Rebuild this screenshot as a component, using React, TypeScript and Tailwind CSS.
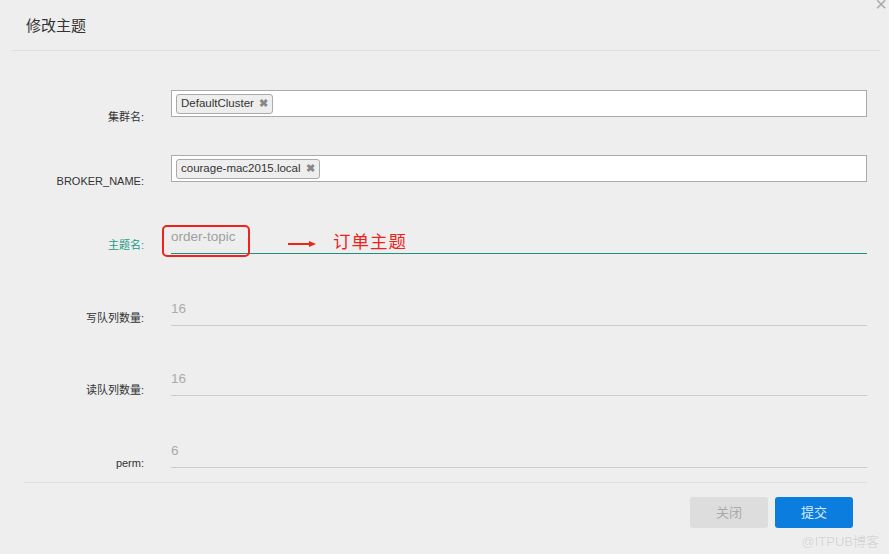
import React from 'react';

const Tag: React.FC<{ text: string }> = ({ text }) => (
    <span className="inline-flex items-center h-[20px] px-[4px] rounded-[3px] border border-[#aaaaaa] bg-[#eeeeee] text-[11.5px] text-[#333333] leading-none">
        {text}
        <span className="ml-[5px] text-[11px] font-bold text-[#888888]">✖</span>
    </span>
);

const Label: React.FC<{ text: string; pt: string; teal?: boolean }> = ({ text, pt, teal }) => (
    <div className={`w-[144px] shrink-0 text-right text-[11px] leading-[14px] ${pt} ${teal ? 'text-[#1a9b88]' : 'text-[#333333]'}`}>
        {text}
    </div>
);

export default function App() {
    return (
        <div className="relative w-[889px] h-[554px] overflow-hidden bg-[#eeeeee] font-['Liberation_Sans','Noto_Sans_CJK_SC',sans-serif]">
            {/* Close */}
            <span className="absolute top-[-6px] right-[2px] text-[20px] leading-none text-[#aaaaaa]">×</span>

            {/* Header */}
            <div className="ml-[12px] mr-[9px] h-[51px] border-b border-[#dedede] flex items-center pt-[2px] pl-[14px] text-[15px] text-[#333333]">
                修改主题
            </div>

            {/* Form */}
            <div className="flex flex-col">
                <div className="flex h-[79px]">
                    <Label text="集群名:" pt="pt-[59px]" />
                    <div className="ml-[27px] w-[696px] pt-[39px]">
                        <div className="h-[27px] bg-white border border-[#aaaaaa] flex items-center pl-[4px]">
                            <Tag text="DefaultCluster" />
                        </div>
                    </div>
                </div>

                <div className="flex h-[70px]">
                    <Label text="BROKER_NAME:" pt="pt-[44px]" />
                    <div className="ml-[27px] w-[696px] pt-[25px]">
                        <div className="h-[27px] bg-white border border-[#aaaaaa] flex items-center pl-[4px]">
                            <Tag text="courage-mac2015.local" />
                        </div>
                    </div>
                </div>

                <div className="relative flex h-[70px]">
                    <Label text="主题名:" pt="pt-[38px]" teal />
                    <div className="ml-[27px] w-[696px] pt-[22px]">
                        <div className="h-[32px] border-b border-[#1f8f80] flex items-center text-[13.5px] font-light text-[#a0a0a0]">
                            order-topic
                        </div>
                    </div>

                    {/* Annotation */}
                    <div className="absolute left-[162px] top-[25px] w-[88px] h-[32px] border-[2.5px] border-[#f0231c] rounded-[5px]" />
                    <svg className="absolute left-[287px] top-[40px]" width="30" height="8" viewBox="0 0 30 8">
                        <line x1="1" y1="4" x2="24" y2="4" stroke="#f0231c" strokeWidth="2" />
                        <path d="M22 1 L29 4 L22 7 Z" fill="#f0231c" />
                    </svg>
                    <span className="absolute left-[333px] top-[30px] text-[17.5px] leading-[22px] tracking-[1px] text-[#f0231c] font-['Noto_Sans_CJK_SC',sans-serif]">
                        订单主题
                    </span>
                </div>

                <div className="flex h-[70px]">
                    <Label text="写队列数量:" pt="pt-[41px]" />
                    <div className="ml-[27px] w-[696px] pt-[24px]">
                        <div className="h-[32px] border-b border-[#cccccc] flex items-center text-[13.5px] text-[#ababab]">16</div>
                    </div>
                </div>

                <div className="flex h-[70px]">
                    <Label text="读队列数量:" pt="pt-[43px]" />
                    <div className="ml-[27px] w-[696px] pt-[24px]">
                        <div className="h-[32px] border-b border-[#cccccc] flex items-center text-[13.5px] text-[#ababab]">16</div>
                    </div>
                </div>

                <div className="flex h-[70px]">
                    <Label text="perm:" pt="pt-[46px]" />
                    <div className="ml-[27px] w-[696px] pt-[26px]">
                        <div className="h-[32px] border-b border-[#cccccc] flex items-center text-[13.5px] text-[#ababab]">6</div>
                    </div>
                </div>
            </div>

            {/* Footer */}
            <div className="ml-[24px] w-[843px] mt-[2px] border-t border-[#dedede] pt-[14px] pr-[14px] flex justify-end gap-[7px]">
                <button className="w-[78px] h-[31px] rounded-[3px] bg-[#dddddd] text-[13px] text-[#aaaaaa]">关闭</button>
                <button className="w-[78px] h-[31px] rounded-[3px] bg-[#0b7ddf] text-[13px] text-[#d8eafc]">提交</button>
            </div>

            {/* Watermark */}
            <span className="absolute right-[10px] bottom-[6px] text-[13px] leading-none text-[#d4d4d4] [text-shadow:0_0_1px_#ffffff]">
                @ITPUB博客
            </span>
        </div>
    );
}
